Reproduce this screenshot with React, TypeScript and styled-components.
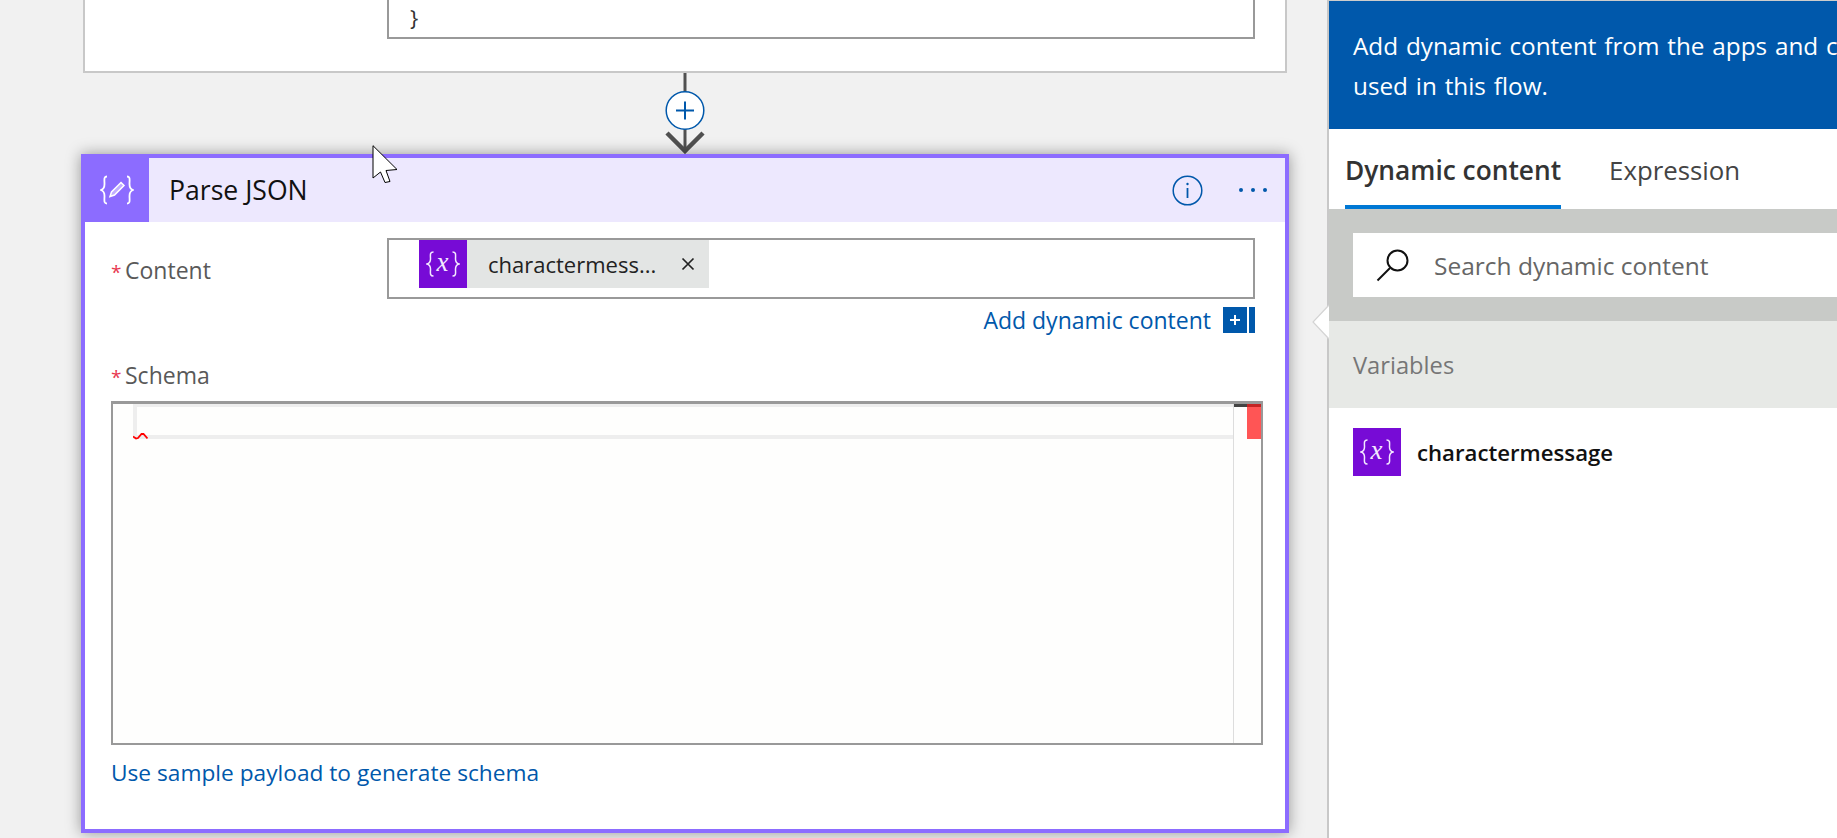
import React from "react";
import styled, { createGlobalStyle } from "styled-components";

const GlobalStyle = createGlobalStyle`
    html,
    body {
        margin: 0;
        padding: 0;
        height: 100%;
        overflow: hidden;
        background: #f1f1f1;
    }

    * {
        box-sizing: border-box;
    }
`;

const Page = styled.div`
    position: relative;
    display: flex;
    width: 1837px;
    height: 838px;
    overflow: hidden;
    font-family: "Open Sans", "Noto Sans", sans-serif;
    font-size: 23px;
    background: #f1f1f1;
`;

const Canvas = styled.main`
    flex: 0 0 1327px;
    height: 838px;
    padding-left: 81px;
    display: flex;
    flex-direction: column;
    align-items: flex-start;
`;

const PrevCard = styled.section`
    width: 1204px;
    height: 73px;
    margin-left: 2px;
    padding-left: 302px;
    background: #fff;
    border: 2px solid #c8c8c8;
    border-top: 0;
`;

const PrevCode = styled.div`
    width: 868px;
    height: 39px;
    padding-left: 21px;
    color: #333;
    font-size: 22px;
    line-height: 34px;
    border: 2px solid #999;
    border-top: 0;
`;

const Connector = styled.div`
    width: 1208px;
    height: 81px;
    display: flex;
    justify-content: center;
`;

const ConnectorArt = styled.svg`
    display: block;
`;

const Card = styled.section`
    width: 1208px;
    height: 679px;
    flex-shrink: 0;
    background: #fff;
    border: 4px solid #8c6cff;
    box-shadow: 0 0 14px rgba(0, 0, 0, 0.38);
`;

const CardHeader = styled.header`
    height: 64px;
    display: flex;
    align-items: center;
    background: #ede8fe;
`;

const HeaderIcon = styled.div`
    width: 64px;
    height: 64px;
    background: #8c6cff;
    display: flex;
    align-items: center;
    justify-content: center;
`;

const CardTitle = styled.h2`
    flex: 1;
    margin: 0 0 0 20px;
    color: #111;
    font-size: 26.6px;
    font-weight: 400;
`;

const InfoButton = styled.svg`
    margin-right: 36px;
`;

const DotsButton = styled.svg`
    margin-right: 18px;
`;

const CardBody = styled.div`
    padding: 16px 22px 0 26px;
`;

const FieldRow = styled.div`
    display: flex;
    align-items: center;
    margin-right: 8px;
`;

const FieldLabel = styled.label`
    display: flex;
    align-items: baseline;
    height: 30px;
    color: #595959;
    line-height: 30px;
`;

const ContentLabel = styled(FieldLabel)`
    width: 276px;
    height: 32px;
    padding-top: 2px;
`;

const SchemaLabel = styled(FieldLabel)`
    margin-top: 27px;
`;

const Required = styled.span`
    width: 14px;
    margin-left: 0;
    color: #e8384f;
    font-size: 19px;
`;

const TokenField = styled.div`
    flex: 1;
    height: 61px;
    padding-left: 30px;
    display: flex;
    align-items: flex-start;
    border: 2px solid #999;
`;

const Token = styled.div`
    width: 290px;
    height: 48px;
    display: flex;
    align-items: center;
    background: #e3e5e4;
`;

const TokenIcon = styled.div`
    width: 48px;
    height: 48px;
    flex-shrink: 0;
    display: flex;
    align-items: center;
    justify-content: center;
    background: #770bd6;
`;

const TokenText = styled.span`
    width: 168px;
    margin-left: 21px;
    color: #222;
    font-size: 22px;
    white-space: nowrap;
`;

const TokenClose = styled.svg`
    margin-left: 25px;
`;

const DynamicRow = styled.div`
    height: 26px;
    margin: 8px 8px 0 0;
    display: flex;
    align-items: center;
    justify-content: flex-end;
    gap: 12px;
`;

const BlueLink = styled.a`
    color: #0058ab;
    line-height: 30px;
    white-space: nowrap;
`;

const PlusBox = styled.div`
    display: flex;
    gap: 2px;
    height: 26px;
`;

const PlusSquare = styled.div`
    width: 24px;
    background: #0058ab;
    color: #fff;
    display: flex;
    align-items: center;
    justify-content: center;
`;

const PlusStripe = styled.div`
    width: 6px;
    background: #0058ab;
`;

const SchemaEditor = styled.div`
    position: relative;
    height: 344px;
    margin-top: 11px;
    padding-left: 20px;
    display: flex;
    background: #fefefd;
    border: 2px solid #999;
    border-top-width: 3px;
`;

const EditorLine = styled.div`
    flex: 1;
    height: 35px;
    background: #fefefd;
    border-top: 3px solid #eee;
    border-bottom: 4px solid #eee;
    border-left: 4px solid #eee;
`;

const Overview = styled.div`
    flex: 0 0 28px;
    display: flex;
    align-items: flex-start;
    border-left: 1px solid #ddd;
`;

const OverviewDark = styled.div`
    width: 13px;
    height: 3px;
    background: #444;
`;

const OverviewError = styled.div`
    width: 14px;
    height: 35px;
    background: #ff5555;
    border-top: 3px solid #c42323;
`;

const Squiggle = styled.svg`
    position: absolute;
    left: 20px;
    top: 28px;
`;

const PayloadLink = styled(BlueLink)`
    display: block;
    margin-top: 13px;
    font-size: 22.7px;
`;

const Panel = styled.aside`
    position: relative;
    flex: 0 0 720px;
    height: 838px;
    background: #fff;
    border-left: 2px solid #c8c8c8;
    border-top: 1px solid #ccc;
`;

const Banner = styled.div`
    height: 128px;
    padding: 25px 24px 0;
    background: #0058ab;
    color: #fff;
    font-size: 24.3px;
    word-spacing: 1.5px;
    line-height: 40px;
    white-space: nowrap;
`;

const Tabs = styled.nav`
    height: 80px;
    padding-left: 16px;
    display: flex;
    gap: 48px;
`;

const Tab = styled.div<{ $active?: boolean }>`
    height: 80px;
    padding-top: 21px;
    color: ${(p) => (p.$active ? "#333" : "#444")};
    font-size: ${(p) => (p.$active ? "26.3px" : "25.8px")};
    line-height: 40px;
    font-weight: ${(p) => (p.$active ? 600 : 400)};
    border-bottom: 4px solid ${(p) => (p.$active ? "#0078d4" : "transparent")};
`;

const SearchBand = styled.div`
    height: 112px;
    padding: 24px 24px 0;
    background: #c8cac7;
`;

const SearchBox = styled.div`
    height: 64px;
    padding-left: 23px;
    display: flex;
    align-items: center;
    gap: 24px;
    background: #fff;
`;

const SearchText = styled.span`
    color: #666;
    font-size: 24.5px;
`;

const GroupHeader = styled.div`
    height: 87px;
    padding-left: 24px;
    display: flex;
    align-items: center;
    color: #767676;
    font-size: 23.7px;
    background: #e7e9e6;
`;

const VariableRow = styled.div`
    margin-top: 20px;
    padding-left: 24px;
    display: flex;
    align-items: center;
    gap: 16px;
`;

const VariableName = styled.span`
    color: #111;
    font-size: 22.2px;
    font-weight: 600;
`;

const Beak = styled.svg`
    position: absolute;
    left: -17px;
    top: 303px;
`;

const Pointer = styled.svg`
    position: absolute;
    left: 372px;
    top: 145px;
`;

const VariableGlyph = () => (
    <svg width="34" height="38" viewBox="0 -6 34 38" fill="none">
        <path
            d="M7.500 1C3.500 1 4.500 4 4.500 8C4.500 11 3.500 12.300 1 13C3.500 13.700 4.500 15 4.500 18C4.500 22 3.500 25 7.500 25"
            stroke="#f3e8ff"
            strokeWidth="1.500"
        />
        <path
            d="M26.500 1C30.500 1 29.500 4 29.500 8C29.500 11 30.500 12.300 33 13C30.500 13.700 29.500 15 29.500 18C29.500 22 30.500 25 26.500 25"
            stroke="#f3e8ff"
            strokeWidth="1.500"
        />
        <text
            x="16.500"
            y="19.500"
            textAnchor="middle"
            fill="#f3e8ff"
            fontFamily="Liberation Serif, serif"
            fontStyle="italic"
            fontSize="27"
        >
            x
        </text>
    </svg>
);

const ParseGlyph = () => (
    <svg width="34" height="30" viewBox="0 0 34 30" fill="none">
        <path
            d="M7 1.500C3.500 1.500 4.500 5 4.500 9C4.500 12.500 3.500 14.200 1 15C3.500 15.800 4.500 17.500 4.500 21C4.500 25 3.500 28.500 7 28.500"
            stroke="#fff"
            strokeWidth="1.800"
        />
        <path
            d="M27 1.500C30.500 1.500 29.500 5 29.500 9C29.500 12.500 30.500 14.200 33 15C30.500 15.800 29.500 17.500 29.500 21C29.500 25 30.500 28.500 27 28.500"
            stroke="#fff"
            strokeWidth="1.800"
        />
        <path d="M21 7.500L24 10.500L14.500 20L10 21.500L11.500 17Z" stroke="#fff" strokeWidth="1.500" fill="#fff" fillOpacity="0.45" />
    </svg>
);

export default function App() {
    return (
        <>
            <GlobalStyle />
            <Page>
                <Canvas>
                    <PrevCard>
                        <PrevCode>{"}"}</PrevCode>
                    </PrevCard>
                    <Connector>
                        <ConnectorArt width="44" height="81" viewBox="0 0 44 81" fill="none">
                            <path d="M22 0V78" stroke="#505050" strokeWidth="3" />
                            <path d="M4 60L22 78L40 60" stroke="#505050" strokeWidth="4.500" />
                            <circle cx="22" cy="37.500" r="18.800" fill="#fff" stroke="#0058ab" strokeWidth="1.500" />
                            <path d="M22 28.500V46.500M13 37.500H31" stroke="#0058ab" strokeWidth="2" />
                        </ConnectorArt>
                    </Connector>
                    <Card>
                        <CardHeader>
                            <HeaderIcon>
                                <ParseGlyph />
                            </HeaderIcon>
                            <CardTitle>Parse JSON</CardTitle>
                            <InfoButton width="31" height="31" viewBox="0 0 31 31" fill="none">
                                <circle cx="15.500" cy="15.500" r="14.300" stroke="#0058ab" strokeWidth="1.500" />
                                <path d="M15.500 13V23" stroke="#0058ab" strokeWidth="1.800" />
                                <circle cx="15.500" cy="9" r="1.200" fill="#0058ab" />
                            </InfoButton>
                            <DotsButton width="28" height="6" viewBox="0 0 28 6" fill="#0058ab">
                                <circle cx="2" cy="3" r="2" />
                                <circle cx="14" cy="3" r="2" />
                                <circle cx="26" cy="3" r="2" />
                            </DotsButton>
                        </CardHeader>
                        <CardBody>
                            <FieldRow>
                                <ContentLabel>
                                    <Required>*</Required>
                                    Content
                                </ContentLabel>
                                <TokenField>
                                    <Token>
                                        <TokenIcon>
                                            <VariableGlyph />
                                        </TokenIcon>
                                        <TokenText>charactermess...</TokenText>
                                        <TokenClose width="14" height="14" viewBox="0 0 14 14" fill="none">
                                            <path d="M1.500 1.500L12.500 12.500M12.500 1.500L1.500 12.500" stroke="#222" strokeWidth="1.700" />
                                        </TokenClose>
                                    </Token>
                                </TokenField>
                            </FieldRow>
                            <DynamicRow>
                                <BlueLink>Add dynamic content</BlueLink>
                                <PlusBox>
                                    <PlusSquare>
                                        <svg width="12" height="12" viewBox="0 0 12 12" fill="none">
                                            <path d="M6 1V11M1 6H11" stroke="#fff" strokeWidth="2" />
                                        </svg>
                                    </PlusSquare>
                                    <PlusStripe />
                                </PlusBox>
                            </DynamicRow>
                            <SchemaLabel>
                                <Required>*</Required>
                                Schema
                            </SchemaLabel>
                            <SchemaEditor>
                                <EditorLine />
                                <Overview>
                                    <OverviewDark />
                                    <OverviewError />
                                </Overview>
                                <Squiggle width="15" height="8" viewBox="0 0 15 8" fill="none">
                                    <path d="M0 4.500L3 6.500L5 6L8.500 2L10.500 2L14.500 6.500" stroke="#f00" strokeWidth="1.800" />
                                </Squiggle>
                            </SchemaEditor>
                            <PayloadLink>Use sample payload to generate schema</PayloadLink>
                        </CardBody>
                    </Card>
                </Canvas>
                <Panel>
                    <Beak width="17" height="36" viewBox="0 0 17 36" fill="none">
                        <path d="M17 1L1 18L17 35Z" fill="#fff" />
                        <path d="M17 1L1 18L17 35" stroke="#d4d4d4" strokeWidth="1.200" />
                    </Beak>
                    <Banner>
                        Add dynamic content from the apps and connectors
                        <br />
                        used in this flow.
                    </Banner>
                    <Tabs>
                        <Tab $active>Dynamic content</Tab>
                        <Tab>Expression</Tab>
                    </Tabs>
                    <SearchBand>
                        <SearchBox>
                            <svg width="34" height="34" viewBox="0 0 34 34" fill="none">
                                <circle cx="21.500" cy="12.500" r="10" stroke="#111" strokeWidth="2" />
                                <path d="M14 20L1.500 32.500" stroke="#111" strokeWidth="2" />
                            </svg>
                            <SearchText>Search dynamic content</SearchText>
                        </SearchBox>
                    </SearchBand>
                    <GroupHeader>Variables</GroupHeader>
                    <VariableRow>
                        <TokenIcon>
                            <VariableGlyph />
                        </TokenIcon>
                        <VariableName>charactermessage</VariableName>
                    </VariableRow>
                </Panel>
                <Pointer width="26" height="39" viewBox="0 0 26 39" fill="none">
                    <path d="M1 0.700V33L8.500 27L13 37.500L18 36.500L14 25.500L25 24.500Z" fill="#fff" stroke="#000" strokeWidth="1" />
                </Pointer>
            </Page>
        </>
    );
}
